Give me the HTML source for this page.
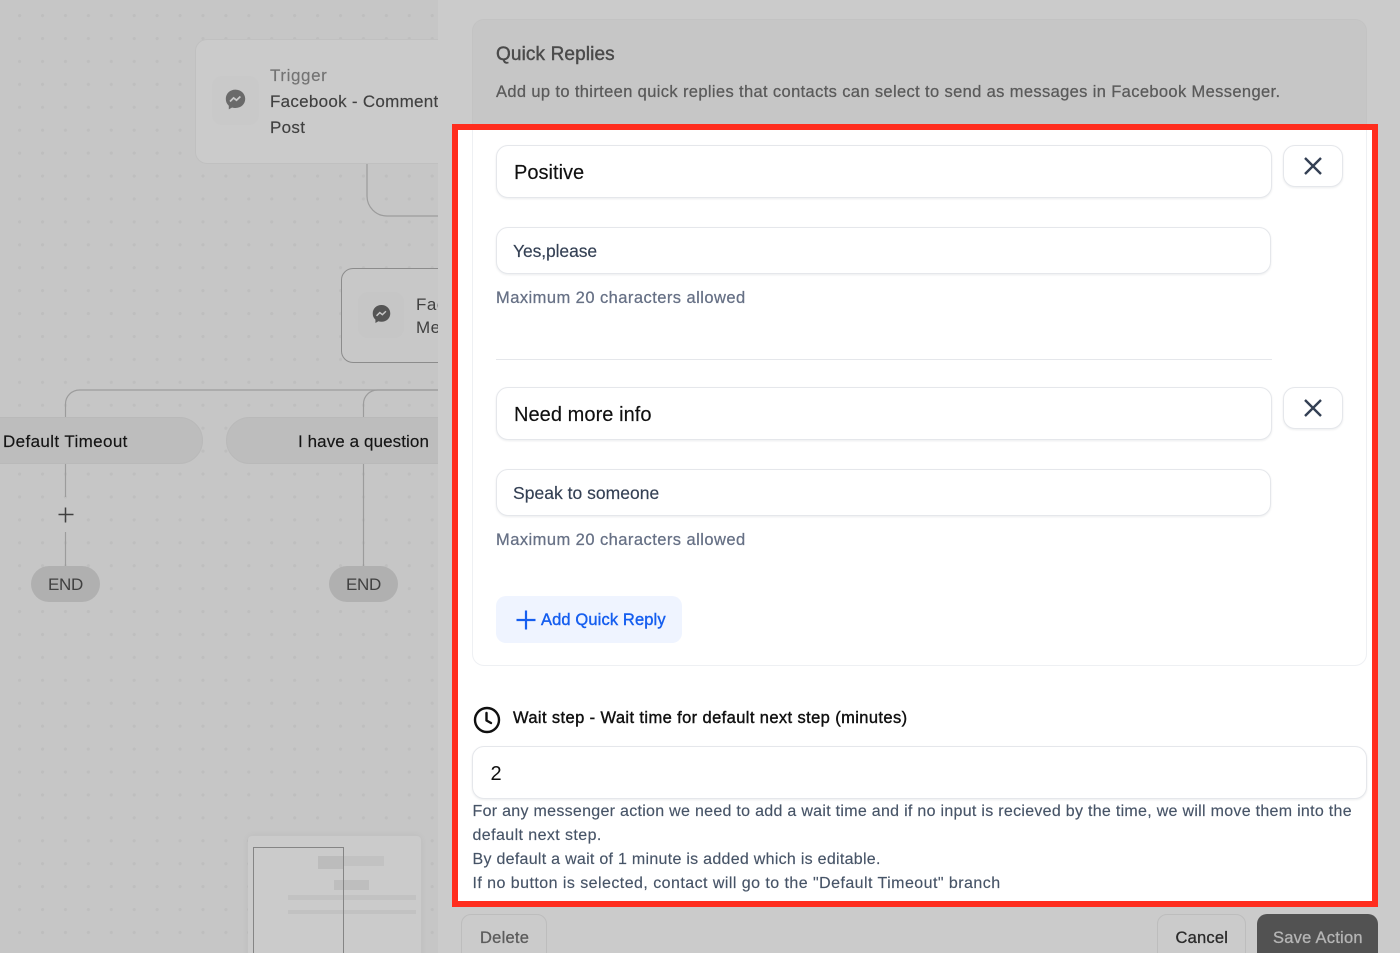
<!DOCTYPE html>
<html><head><meta charset="utf-8"><style>
html,body{margin:0;padding:0;width:1400px;height:953px;overflow:hidden}
body{background:#cbcbcb;font-family:"Liberation Sans",sans-serif}
#root{position:absolute;left:0;top:0;width:1400px;height:953px;overflow:hidden;background:#cbcbcb}
.a{position:absolute;box-sizing:border-box}
.t{position:absolute;white-space:nowrap}
#left{left:0;top:0;width:438px;height:953px;overflow:hidden;background-color:#c6c6c6;background-image:radial-gradient(circle at 1.6px 1.6px,#bebebe 1.4px,transparent 1.8px);background-size:22.93px 22.93px;background-position:18px 14px}
.in{background:#fff;border:1px solid #e5e7eb;border-radius:12px;box-shadow:0 1px 2px rgba(16,24,40,.08)}
.hint{color:#667085;font-size:16.5px;letter-spacing:.45px;-webkit-text-stroke:.25px #667085}
.body{color:#475467;font-size:16px;-webkit-text-stroke:.15px #475467}
</style></head><body><div id="root">
<div id="left" class="a">
 <svg class="a" style="left:0;top:0" width="438" height="953" fill="none" stroke="#9c9c9c" stroke-width="1.2">
  <path d="M367 160V196a20 20 0 0 0 20 20H438"/>
  <path d="M65.500 418V404a14 14 0 0 1 14-14H438"/>
  <path d="M363.500 418V404a14 14 0 0 1 14-14H438"/>
  <path d="M65.500 464V497M65.500 532V567M363.500 464V567"/>
 </svg>
 <div class="a" style="left:194.500px;top:39px;width:260px;height:125px;background:#cbcbcb;border:1px solid #c0c0c0;border-radius:12px"></div>
 <div class="a" style="left:212px;top:76px;width:47px;height:49px;background:#c9c9c9;border-radius:10px"></div>
 <svg class="a" style="left:225px;top:89px" width="21" height="21" viewBox="0 0 21 21"><path fill="#6a6a6a" d="M10.500.6C4.900.6.800 4.600.800 9.900c0 2.800 1.100 5.100 3 6.800v3.700l3.300-1.900c1 .3 2.200.5 3.400.5 5.600 0 9.700-4 9.700-9.100S16.100.6 10.500.6z"/><path fill="none" stroke="#cbcbcb" stroke-width="1.700" d="M5 12.500l3.600-3.600 2.900 2.300 3.900-3.700"/></svg>
 <div class="t" style="left:270px;top:66px;font-size:17px;letter-spacing:.6px;color:#737373;-webkit-text-stroke:.15px #737373">Trigger</div>
 <div class="t" style="left:270px;top:91.500px;font-size:17px;letter-spacing:.28px;color:#404040;-webkit-text-stroke:.15px #404040">Facebook - Comment</div>
 <div class="t" style="left:270px;top:118px;font-size:17px;letter-spacing:.3px;color:#404040;-webkit-text-stroke:.15px #404040">Post</div>

 <div class="a" style="left:340.500px;top:268px;width:140px;height:95px;background:#c8c8c8;border:1px solid #8c8c8c;border-radius:12px"></div>
 <div class="a" style="left:358px;top:292px;width:46px;height:46px;background:#c6c6c6;border-radius:10px"></div>
 <svg class="a" style="left:372px;top:304px" width="19" height="20" viewBox="0 0 21 21"><path fill="#555" d="M10.500.6C4.900.6.800 4.600.800 9.900c0 2.800 1.100 5.100 3 6.800v3.700l3.300-1.900c1 .3 2.200.5 3.400.5 5.600 0 9.700-4 9.700-9.100S16.100.6 10.500.6z"/><path fill="none" stroke="#c8c8c8" stroke-width="1.600" d="M5 12.500l3.600-3.600 2.900 2.300 3.900-3.700"/></svg>
 <div class="t" style="left:416px;top:295px;font-size:17px;letter-spacing:.5px;color:#404040">Fac</div>
 <div class="t" style="left:416px;top:318px;font-size:17px;letter-spacing:.5px;color:#404040">Me</div>

 <div class="a" style="left:-60px;top:417px;width:263px;height:47px;background:#bdbdbd;border:1px solid #b9b9b9;border-radius:24px"></div>
 <div class="a" style="left:226px;top:417px;width:300px;height:47px;background:#bdbdbd;border:1px solid #b9b9b9;border-radius:24px"></div>
 <div class="t" style="left:3px;top:432px;font-size:17px;letter-spacing:.38px;color:#141414;-webkit-text-stroke:.15px #141414">Default Timeout</div>
 <div class="t" style="left:298px;top:432px;font-size:17px;letter-spacing:.09px;color:#141414;-webkit-text-stroke:.15px #141414">I have a question</div>
 <svg class="a" style="left:58px;top:507px" width="16" height="16" fill="none" stroke="#3f3f3f" stroke-width="1.500"><path d="M7.500 .5V15.500M.5 7.500H15.500"/></svg>
 <div class="a" style="left:31px;top:566px;width:69px;height:36px;background:#b0b0b0;border-radius:18px"></div>
 <div class="a" style="left:329px;top:566px;width:69px;height:36px;background:#b0b0b0;border-radius:18px"></div>
 <div class="t" style="left:48px;top:575px;font-size:17px;letter-spacing:-.3px;color:#404040">END</div>
 <div class="t" style="left:346px;top:575px;font-size:17px;letter-spacing:-.3px;color:#404040">END</div>

 <div class="a" style="left:248px;top:836px;width:173px;height:130px;background:#cbcbcb;border-radius:4px;box-shadow:0 0 8px rgba(0,0,0,.05)"></div>
 <div class="a" style="left:318px;top:856px;width:66px;height:10px;background:#c2c2c2"></div>
 <div class="a" style="left:318px;top:856px;width:26px;height:13px;background:#bcbcbc"></div>
 <div class="a" style="left:334px;top:880px;width:35px;height:10px;background:#bebebe"></div>
 <div class="a" style="left:288px;top:895px;width:128px;height:5px;background:#c2c2c2"></div>
 <div class="a" style="left:288px;top:910px;width:128px;height:4px;background:#c2c2c2"></div>
 <div class="a" style="left:253px;top:847px;width:91px;height:130px;border:1px solid #858585"></div>
</div>

<div class="a" style="left:472px;top:19px;width:895px;height:120px;background:#c6c6c6;border:1px solid #c3c3c3;border-radius:12px"></div>
<div class="t" style="left:496px;top:44px;font-size:19px;letter-spacing:.12px;-webkit-text-stroke:.4px #4a4a4a;color:#4a4a4a">Quick Replies</div>
<div class="t" style="left:496px;top:83px;font-size:16.500px;letter-spacing:.36px;color:#5a5a5a;-webkit-text-stroke:.25px #5a5a5a">Add up to thirteen quick replies that contacts can select to send as messages in Facebook Messenger.</div>

<div class="a" style="left:452px;top:124px;width:926px;height:783px;background:#fff;border:6.500px solid #ff2d1e"></div>
<div class="a" style="left:472px;top:130px;width:895px;height:536px;border:1px solid #eef0f3;border-top:0;border-radius:0 0 12px 12px"></div>

<div class="a in" style="left:496px;top:145px;width:775.500px;height:53px"></div>
<div class="t" style="left:514px;top:162px;font-size:20px;letter-spacing:.02px;color:#101010;-webkit-text-stroke:.15px #101010">Positive</div>
<div class="a in" style="left:1283px;top:145px;width:60px;height:42px"></div>
<svg class="a" style="left:1303px;top:156px" width="20" height="20" fill="none" stroke="#344054" stroke-width="2.400"><path d="M2 2L18 18M18 2L2 18"/></svg>
<div class="a in" style="left:496px;top:227px;width:775px;height:47px"></div>
<div class="t" style="left:513px;top:241px;font-size:17.500px;letter-spacing:-.1px;color:#344054;-webkit-text-stroke:.15px #344054">Yes,please</div>
<div class="t hint" style="left:496px;top:288.500px">Maximum 20 characters allowed</div>
<div class="a" style="left:496px;top:359px;width:775.500px;height:1px;background:#e5e7eb"></div>

<div class="a in" style="left:496px;top:387px;width:775.500px;height:53px"></div>
<div class="t" style="left:514px;top:404px;font-size:20px;letter-spacing:.06px;color:#101010;-webkit-text-stroke:.15px #101010">Need more info</div>
<div class="a in" style="left:1283px;top:387px;width:60px;height:42px"></div>
<svg class="a" style="left:1303px;top:398px" width="20" height="20" fill="none" stroke="#344054" stroke-width="2.400"><path d="M2 2L18 18M18 2L2 18"/></svg>
<div class="a in" style="left:496px;top:469px;width:775px;height:47px"></div>
<div class="t" style="left:513px;top:483px;font-size:17.500px;letter-spacing:.02px;color:#344054;-webkit-text-stroke:.15px #344054">Speak to someone</div>
<div class="t hint" style="left:496px;top:530.500px">Maximum 20 characters allowed</div>

<div class="a" style="left:496px;top:596px;width:186px;height:47px;background:#eff4ff;border-radius:10px"></div>
<svg class="a" style="left:516px;top:609.500px" width="20" height="20" fill="none" stroke="#155eef" stroke-width="2.200"><path d="M10 .5V19.500M.5 10H19.500"/></svg>
<div class="t" style="left:541px;top:611px;font-size:16.500px;letter-spacing:.12px;color:#155eef;-webkit-text-stroke:.4px #155eef">Add Quick Reply</div>

<svg class="a" style="left:473px;top:706px" width="28" height="28" viewBox="0 0 28 28" fill="none" stroke="#101010" stroke-width="2.400"><circle cx="14" cy="14" r="12"/><path d="M13.500 7V14.500L18 17" stroke-linecap="round" stroke-linejoin="round"/></svg>
<div class="t" style="left:513px;top:709px;font-size:16.500px;letter-spacing:.39px;color:#101010;-webkit-text-stroke:.4px #101010">Wait step - Wait time for default next step (minutes)</div>
<div class="a in" style="left:472px;top:746px;width:895px;height:53px"></div>
<div class="t" style="left:490.500px;top:763px;font-size:20px;color:#101010">2</div>
<div class="t body" style="left:472.500px;top:803px;letter-spacing:.29px">For any messenger action we need to add a wait time and if no input is recieved by the time, we will move them into the</div>
<div class="t body" style="left:472.500px;top:827px;letter-spacing:.41px">default next step.</div>
<div class="t body" style="left:472.500px;top:851px;letter-spacing:.28px">By default a wait of 1 minute is added which is editable.</div>
<div class="t body" style="left:472.500px;top:875px;letter-spacing:.45px">If no button is selected, contact will go to the "Default Timeout" branch</div>

<div class="a" style="left:461px;top:914px;width:86px;height:60px;border:1px solid #bdbdbd;border-radius:10px"></div>
<div class="t" style="left:480px;top:929px;font-size:16.500px;letter-spacing:.25px;color:#5c5c5c;-webkit-text-stroke:.3px #5c5c5c">Delete</div>
<div class="a" style="left:1157px;top:914px;width:89px;height:60px;border:1px solid #bdbdbd;border-radius:10px"></div>
<div class="t" style="left:1175.500px;top:929px;font-size:16.500px;letter-spacing:.2px;color:#2a2a2a;-webkit-text-stroke:.3px #2a2a2a">Cancel</div>
<div class="a" style="left:1257px;top:914px;width:121px;height:60px;background:#525252;border-radius:10px"></div>
<div class="t" style="left:1273px;top:929px;font-size:16.500px;letter-spacing:.24px;color:#b5b5b5;-webkit-text-stroke:.3px #b5b5b5">Save Action</div>
</div></body></html>
